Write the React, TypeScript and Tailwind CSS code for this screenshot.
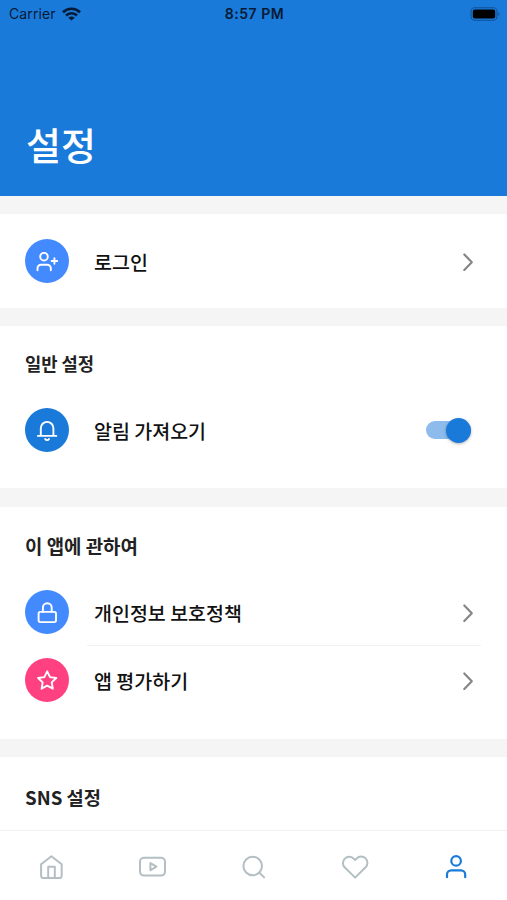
import React, { useState } from 'react'
import type { ReactNode } from 'react'

const FONT = "font-['Noto_Sans_CJK_KR','Noto_Sans',sans-serif]"

/* ── Icons (28 × 28 line set) ───────────────── */

function Icon({ children, strokeWidth = 2 }: { children: ReactNode; strokeWidth?: number }) {
  return (
    <svg
      viewBox="0 0 28 28"
      className="h-7 w-7 shrink-0"
      fill="none"
      stroke="currentColor"
      strokeWidth={strokeWidth}
      strokeLinecap="round"
      strokeLinejoin="round"
      aria-hidden
    >
      {children}
    </svg>
  )
}

const UserPlusIcon = () => (
  <Icon strokeWidth={1.9}>
    <circle cx="11" cy="9.7" r="3.8" />
    <path d="M4.5 23.3v-2a3.6 3.6 0 0 1 3.6-3.6h6.1a3.6 3.6 0 0 1 3.6 3.6v2M21.4 11.2v5.6M18.6 14h5.6" />
  </Icon>
)

const BellIcon = () => (
  <Icon strokeWidth={1.9}>
    <path d="M4.9 19.9h18.4M7.8 19.9v-7.7a6.3 6.3 0 0 1 12.6 0v7.7M12.2 23a2.2 2.2 0 0 0 3.8 0" />
  </Icon>
)

const LockIcon = () => (
  <Icon strokeWidth={1.9}>
    <rect x="5.6" y="13.9" width="17.4" height="10.2" rx="1.8" />
    <path d="M9.9 13.7V9.6a4.4 4.4 0 0 1 8.8 0v4.1" />
  </Icon>
)

const StarIcon = () => (
  <Icon strokeWidth={1.9}>
    <path d="M14.2 5.3l2.8 5.8 6.3.9-4.6 4.4 1.1 6.3-5.6-3-5.6 3 1.1-6.3L5.1 12l6.3-.9z" />
  </Icon>
)

const HomeIcon = () => (
  <Icon>
    <path d="M4.1 11.2 14.4 3.2l10.3 8v11.6a2.3 2.3 0 0 1-2.3 2.3h-16a2.3 2.3 0 0 1-2.3-2.3z" />
    <path d="M11.2 25v-11.2h6.6V25" />
  </Icon>
)

const VideoIcon = () => (
  <Icon>
    <rect x="2" y="4.8" width="25" height="17.8" rx="4" />
    <path d="M12.4 10.1l6 3.6-6 3.6z" />
  </Icon>
)

const SearchIcon = () => (
  <Icon>
    <circle cx="13.7" cy="13" r="9.3" />
    <path d="M20.4 19.7l4.7 4.7" />
  </Icon>
)

const HeartIcon = () => (
  <Icon>
    <path d="M24.6 5.4a6.3 6.3 0 0 0-8.9 0L14.1 7l-1.6-1.6a6.3 6.3 0 0 0-8.9 8.9l10.5 10.3 10.5-10.3a6.3 6.3 0 0 0 0-8.9z" />
  </Icon>
)

const UserIcon = () => (
  <Icon strokeWidth={2.2}>
    <circle cx="14.1" cy="7.9" r="4.8" />
    <path d="M5 24.2v-2.7a4.2 4.2 0 0 1 4.2-4.2h9.8a4.2 4.2 0 0 1 4.2 4.2v2.7" />
  </Icon>
)

const Chevron = () => (
  <svg
    viewBox="0 0 12 20"
    className="mr-[33px] h-5 w-3 shrink-0 text-[#858585]"
    fill="none"
    stroke="currentColor"
    strokeWidth="2.1"
    strokeLinecap="round"
    strokeLinejoin="round"
    aria-hidden
  >
    <path d="M2.3 3.4l7.5 7.8-7.5 7.8" />
  </svg>
)

/* ── Building blocks ───────────────── */

interface RowProps {
  icon: ReactNode
  color: string
  label: string
  children?: ReactNode
}

function Row({ icon, color, label, children }: RowProps) {
  return (
    <div className="flex h-11 items-center pl-[25px]">
      <span className={`flex h-11 w-11 shrink-0 items-center justify-center rounded-full text-white ${color}`}>
        {icon}
      </span>
      <span className="ml-[25px] flex-1 pt-0.5 text-[19.5px] font-medium leading-7 text-[#111]">{label}</span>
      {children}
    </div>
  )
}

function SectionTitle({ size, children }: { size: string; children: ReactNode }) {
  return <h2 className={`pl-[25px] font-bold leading-7 text-[#222] ${size}`}>{children}</h2>
}

function Toggle() {
  const [on, setOn] = useState(true)

  return (
    <button
      type="button"
      role="switch"
      aria-checked={on}
      aria-label="알림 가져오기"
      onClick={() => setOn(!on)}
      className={`mr-9 flex h-[18px] w-[45px] items-center rounded-full ${on ? 'justify-end bg-[#8cbbec]' : 'bg-gray-300'}`}
    >
      <span
        className={`h-[25px] w-[25px] shrink-0 rounded-full shadow-[0_1px_3px_rgba(0,0,0,0.3)] ${on ? 'bg-[#1a7ada]' : 'bg-white'}`}
      />
    </button>
  )
}

function StatusBar() {
  return (
    <div className="grid h-[27px] grid-cols-3 items-center pl-[9px] pr-[7px] font-['Inter',sans-serif] text-[14px] text-[#061a35]">
      <div className="flex items-center gap-[6px]">
        <span className="tracking-[0.1px]">Carrier</span>
        <svg viewBox="0 0 19 14" className="h-[14px] w-[19px]" fill="none" stroke="currentColor" strokeWidth="2.7" aria-hidden>
          <path d="M1 5.2a12.2 12.2 0 0 1 17 0M4 8.5a7.9 7.9 0 0 1 11 0" />
          <path d="M9.5 13.6 6.3 10.7a4.6 4.6 0 0 1 6.4 0z" fill="currentColor" stroke="none" />
        </svg>
      </div>
      <span className="text-center font-semibold tracking-[0.5px]">8:57 PM</span>
      <svg viewBox="0 0 30 14" className="h-[14px] w-[30px] justify-self-end" aria-hidden>
        <rect x="1" y="0.8" width="26" height="12.4" rx="3.8" fill="none" stroke="#115094" strokeWidth="1.1" />
        <rect x="2.8" y="2.6" width="22.4" height="8.8" rx="2" fill="#000" />
        <path d="M28.4 5v4c1.4-.6 1.4-3.4 0-4z" fill="#115094" />
      </svg>
    </div>
  )
}

const tabs = [
  { id: 'home', icon: <HomeIcon /> },
  { id: 'video', icon: <VideoIcon /> },
  { id: 'search', icon: <SearchIcon /> },
  { id: 'likes', icon: <HeartIcon /> },
  { id: 'profile', icon: <UserIcon /> },
]

function TabBar() {
  const [active, setActive] = useState('profile')

  return (
    <nav className="grid h-[70px] shrink-0 grid-cols-5 border-t border-[#f0f0f0] bg-white pb-[2px]">
      {tabs.map((tab) => (
        <button
          key={tab.id}
          type="button"
          aria-label={tab.id}
          onClick={() => setActive(tab.id)}
          className={`flex h-full items-center justify-center pt-[5px] ${tab.id === active ? 'text-[#1a7ada]' : 'text-[#b3bfc2]'}`}
        >
          {tab.icon}
        </button>
      ))}
    </nav>
  )
}

export default function App() {
  return (
    <div className={`flex h-[900px] w-full flex-col overflow-hidden bg-[#f5f5f5] ${FONT}`}>
      <header className="flex h-[196px] shrink-0 flex-col justify-between bg-[#1a7ada]">
        <StatusBar />
        <h1 className="pb-[24px] pl-[26px] text-[38px] font-medium leading-[56px] text-white">설정</h1>
      </header>

      <main className="flex min-h-0 flex-1 flex-col gap-[18px] overflow-hidden pt-[18px]">
        <section className="h-[94px] shrink-0 bg-white pt-[25px]">
          <Row icon={<UserPlusIcon />} color="bg-[#448aff]" label="로그인">
            <Chevron />
          </Row>
        </section>

        <section className="h-[162px] shrink-0 bg-white pt-[23px]">
          <SectionTitle size="text-[17.7px]">일반 설정</SectionTitle>
          <div className="pt-[31px]">
            <Row icon={<BellIcon />} color="bg-[#1a7ada]" label="알림 가져오기">
              <Toggle />
            </Row>
          </div>
        </section>

        <section className="mt-px h-[232px] shrink-0 bg-white pt-[25px]">
          <SectionTitle size="text-[18.9px]">이 앱에 관하여</SectionTitle>
          <div className="pt-[30px]">
            <Row icon={<LockIcon />} color="bg-[#448aff]" label="개인정보 보호정책">
              <Chevron />
            </Row>
            <div className="mb-3 ml-[87px] mr-[26px] mt-[11px] h-px bg-[#f1f1f1]" />
            <Row icon={<StarIcon />} color="bg-[#ff4081]" label="앱 평가하기">
              <Chevron />
            </Row>
          </div>
        </section>

        <section className="flex-1 bg-white pt-[26px]">
          <SectionTitle size="text-[18.7px]">SNS 설정</SectionTitle>
        </section>
      </main>

      <TabBar />
    </div>
  )
}
